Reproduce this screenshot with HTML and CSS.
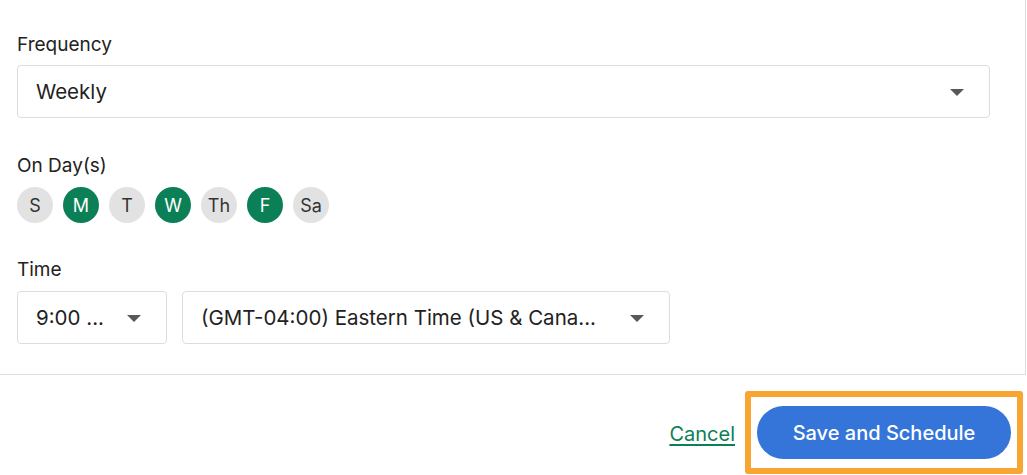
FILE: index.html
```html
<!DOCTYPE html>
<html lang="en">
<head>
<meta charset="utf-8">
<title>Schedule</title>
<link rel="stylesheet" href="styles.css">
</head>
<body>
<div class="panel">
  <div class="field field-frequency">
    <div class="label">Frequency</div>
    <div class="select select-wide">
      <span class="select-value">Weekly</span>
      <span class="caret"></span>
    </div>
  </div>
  <div class="field field-days">
    <div class="label">On Day(s)</div>
    <div class="days">
      <span class="day">S</span>
      <span class="day day-on">M</span>
      <span class="day">T</span>
      <span class="day day-on">W</span>
      <span class="day">Th</span>
      <span class="day day-on">F</span>
      <span class="day">Sa</span>
    </div>
  </div>
  <div class="field field-time">
    <div class="label">Time</div>
    <div class="time-row">
      <div class="select select-time">
        <span class="select-value">9:00 ...</span>
        <span class="caret"></span>
      </div>
      <div class="select select-zone">
        <span class="select-value">(GMT-04:00) Eastern Time (US &amp; Cana...</span>
        <span class="caret"></span>
      </div>
    </div>
  </div>
</div>
<div class="footer">
  <a class="cancel" href="#">Cancel</a>
  <div class="highlight">
    <button class="primary" type="button">Save and Schedule</button>
  </div>
</div>
</body>
</html>
```
FILE: styles.css
```css
html, body {
  margin: 0;
  padding: 0;
  background: #ffffff;
}
body {
  width: 1027px;
  height: 475px;
  overflow: hidden;
  font-family: "Inter", "Liberation Sans", sans-serif;
  color: #222222;
}
.panel {
  box-sizing: border-box;
  width: 1026px;
  height: 375px;
  padding: 33px 0 0 17px;
  border-right: 1px solid #dedede;
  border-bottom: 1px solid #dedede;
}
.field {
  display: flex;
  flex-direction: column;
}
.label {
  font-size: 19px;
  line-height: 24px;
  height: 24px;
}
.field-frequency .label { margin-bottom: 8px; }
.field-days { margin-top: 36px; }
.field-days .label { margin-bottom: 9px; }
.field-time { margin-top: 35px; }
.field-time .label { margin-bottom: 9px; }

.select {
  box-sizing: border-box;
  height: 53px;
  border: 1px solid #dddddd;
  border-radius: 4px;
  display: flex;
  align-items: center;
  justify-content: space-between;
  padding: 0 25px 0 18px;
  font-size: 20.5px;
  color: #222222;
}
.select-wide { width: 973px; }
.select-time { width: 150px; }
.select-zone { width: 488px; }
.select-value {
  white-space: nowrap;
}
.caret {
  width: 0;
  height: 0;
  border-left: 7px solid transparent;
  border-right: 7px solid transparent;
  border-top: 7px solid #585858;
  margin-top: 2px;
}
.time-row {
  display: flex;
  gap: 15px;
}
.days {
  display: flex;
  gap: 10px;
}
.day {
  width: 36px;
  height: 36px;
  border-radius: 50%;
  background: #e2e2e2;
  color: #333333;
  font-size: 18px;
  display: flex;
  align-items: center;
  justify-content: center;
}
.day-on {
  background: #0b7f55;
  color: #ffffff;
}
.footer {
  box-sizing: border-box;
  height: 100px;
  display: flex;
  align-items: center;
  justify-content: flex-end;
  padding: 16px 4px 1px 0;
}
.cancel {
  color: #0b7f55;
  font-size: 20px;
  text-decoration: underline;
  text-underline-offset: 3px;
  margin-right: 10px;
  margin-top: 2px;
}
.highlight {
  box-sizing: border-box;
  width: 278px;
  height: 83px;
  border: 6px solid #f9a531;
  border-radius: 3px;
  display: flex;
  align-items: center;
  justify-content: center;
}
.primary {
  width: 254px;
  height: 53px;
  border: none;
  border-radius: 27px;
  background: #3574d8;
  color: #ffffff;
  font-family: "Inter", "Liberation Sans", sans-serif;
  font-size: 20px;
  font-weight: 500;
  padding: 0;
}
```
